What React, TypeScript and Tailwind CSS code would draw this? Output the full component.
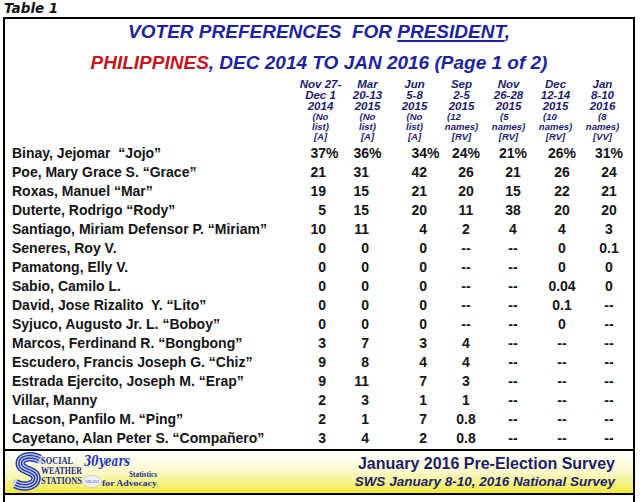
const SANS = "font-['Liberation_Sans',Arial,sans-serif]";

// header text per survey column
const HEADERS = [
  ['Nov 27-', 'Dec 1', '2014', '(No', 'list)', '[A]'],
  ['Mar', '20-13', '2015', '(No', 'list)', '[A]'],
  ['Jun', '5-8', '2015', '(No', 'list)', '[A]'],
  ['Sep', '2-5', '2015', '(12', 'names)', '[RV]'],
  ['Nov', '26-28', '2015', '(5', 'names)', '[RV]'],
  ['Dec', '12-14', '2015', '(10', 'names)', '[RV]'],
  ['Jan', '8-10', '2016', '(8', 'names)', '[VV]'],
];

// where the "(12" style line sits inside its column
const SMALL_FIRST = ['text-center', 'text-center', 'text-center', 'text-left pl-[9px]', 'text-left pl-[15px]', 'text-left pl-[11px]', 'text-left pl-[19px]'];

const DATA_CELL = [
  'text-right pr-[18px]',
  'text-right pr-[22px]',
  'text-right pr-[11px]',
  'text-center pl-[9px]',
  'text-center pl-[9px]',
  'text-center pl-[13px]',
  'text-center pl-[13px]',
];

const ROWS: [string, string[]][] = [
  ['Binay, Jejomar  \u201cJojo\u201d', ['37%', '36%', '34%', '24%', '21%', '26%', '31%']],
  ['Poe, Mary Grace S. \u201cGrace\u201d', ['21', '31', '42', '26', '21', '26', '24']],
  ['Roxas, Manuel \u201cMar\u201d', ['19', '15', '21', '20', '15', '22', '21']],
  ['Duterte, Rodrigo \u201cRody\u201d', ['5', '15', '20', '11', '38', '20', '20']],
  ['Santiago, Miriam Defensor P. \u201cMiriam\u201d', ['10', '11', '4', '2', '4', '4', '3']],
  ['Seneres, Roy V.', ['0', '0', '0', '--', '--', '0', '0.1']],
  ['Pamatong, Elly V.', ['0', '0', '0', '--', '--', '0', '0']],
  ['Sabio, Camilo L.', ['0', '0', '0', '--', '--', '0.04', '0']],
  ['David, Jose Rizalito  Y. \u201cLito\u201d', ['0', '0', '0', '--', '--', '0.1', '--']],
  ['Syjuco, Augusto Jr. L. \u201cBoboy\u201d', ['0', '0', '0', '--', '--', '0', '--']],
  ['Marcos, Ferdinand R. \u201cBongbong\u201d', ['3', '7', '3', '4', '--', '--', '--']],
  ['Escudero, Francis Joseph G. \u201cChiz\u201d', ['9', '8', '4', '4', '--', '--', '--']],
  ['Estrada Ejercito, Joseph M. \u201cErap\u201d', ['9', '11', '7', '3', '--', '--', '--']],
  ['Villar, Manny', ['2', '3', '1', '1', '--', '--', '--']],
  ['Lacson, Panfilo M. \u201cPing\u201d', ['2', '1', '7', '0.8', '--', '--', '--']],
  ['Cayetano, Alan Peter S. \u201cCompa\u00f1ero\u201d', ['3', '4', '2', '0.8', '--', '--', '--']],
];

function Cell({ value, col }: { value: string; col: number }) {
  // first three columns hang the % sign past the right edge
  if (col < 3 && value.endsWith('%')) {
    return (
      <div className={DATA_CELL[col]}>
        {value.slice(0, -1)}
        <span className="inline-block w-0">%</span>
      </div>
    );
  }
  return <div className={DATA_CELL[col]}>{value}</div>;
}

type P = [number, number];
// centre line of the striped "S" mark
const S_SEGS: [P, P, P, P][] = [
  [[25, 4], [15, -1], [3, 3], [7, 11]],
  [[7, 11], [10, 16], [22, 16], [22, 23]],
  [[22, 23], [22, 31], [10, 33], [2, 29]],
];

function ribbon(offset: number) {
  const pts: string[] = [];
  S_SEGS.forEach(([a, b, c, d], si) => {
    for (let k = si === 0 ? 0 : 1; k <= 14; k++) {
      const t = k / 14;
      const u = 1 - t;
      const x = u * u * u * a[0] + 3 * u * u * t * b[0] + 3 * u * t * t * c[0] + t * t * t * d[0];
      const y = u * u * u * a[1] + 3 * u * u * t * b[1] + 3 * u * t * t * c[1] + t * t * t * d[1];
      const dx = 3 * u * u * (b[0] - a[0]) + 6 * u * t * (c[0] - b[0]) + 3 * t * t * (d[0] - c[0]);
      const dy = 3 * u * u * (b[1] - a[1]) + 6 * u * t * (c[1] - b[1]) + 3 * t * t * (d[1] - c[1]);
      const len = Math.hypot(dx, dy) || 1;
      pts.push(`${(x - (dy / len) * offset).toFixed(2)} ${(y + (dx / len) * offset).toFixed(2)}`);
    }
  });
  return 'M' + pts.join(' L');
}

function SwsLogo() {
  return (
    <svg width="160" height="40" viewBox="0 0 160 40">
      <g transform="translate(1 3)" fill="none" strokeLinecap="round">
        <path d={ribbon(0)} stroke="#c4cff2" strokeWidth="9.5" />
        {[-4, -1.35, 1.35, 4].map((o) => (
          <path key={o} d={ribbon(o)} stroke="#2a3a9c" strokeWidth="1.4" />
        ))}
      </g>
      <g fill="#1f2c86" fontFamily="'Liberation Serif', serif" fontWeight="700" fontSize="11">
        <text x="28" y="12" textLength="32" lengthAdjust="spacingAndGlyphs">SOCIAL</text>
        <text x="28" y="22" textLength="41" lengthAdjust="spacingAndGlyphs">WEATHER</text>
        <text x="28" y="32" textLength="41" lengthAdjust="spacingAndGlyphs">STATIONS</text>
      </g>
      <text x="71" y="14" fill="#2a36b8" fontFamily="'DejaVu Serif', serif" fontStyle="italic" fontWeight="700" fontSize="14" textLength="46" lengthAdjust="spacingAndGlyphs">30years</text>
      <g fill="#1f2c86" fontFamily="'Liberation Serif', serif" fontWeight="700" fontSize="8.5">
        <text x="116" y="25" textLength="28" lengthAdjust="spacingAndGlyphs">Statistics</text>
        <text x="89" y="34" textLength="55" lengthAdjust="spacingAndGlyphs">for Advocacy</text>
      </g>
      <ellipse cx="79" cy="29.5" rx="9.5" ry="6" fill="#eef0f8" stroke="#b8bcd8" strokeWidth="0.6" />
      <text x="72" y="31" fill="#5060b8" fontFamily="'Liberation Sans', sans-serif" fontStyle="italic" fontSize="4" textLength="14" lengthAdjust="spacingAndGlyphs">1985-2015</text>
    </svg>
  );
}

export default function App() {
  return (
    <div className={`w-[640px] h-[502px] overflow-hidden bg-white ${SANS}`}>
      <div className="h-[17px] pl-[4px] pt-[1px] text-[13.5px] leading-[15px] font-bold italic text-[#111] font-['DejaVu_Sans',sans-serif]">
        Table 1
      </div>
      <div className="ml-[3px] w-[632px] h-[485px] border-2 border-b-0 border-black">
        {/* title */}
        <div className="text-center text-[19px] font-bold italic whitespace-pre text-[#1d23a0]">
          <div className="h-[26px] leading-[26px]">
            {'VOTER PREFERENCES  FOR '}
            <span className="underline decoration-2 underline-offset-2">PRESIDENT</span>,
          </div>
          <div className="h-[26px] mt-[5px] leading-[26px]">
            <span className="text-[#c4161c]">PHILIPPINES</span>, DEC 2014 TO JAN 2016 (Page 1 of 2)
          </div>
        </div>

        {/* column headers */}
        <div className="mt-[3px] pl-[7px] grid grid-cols-[285px_repeat(7,47px)] font-bold italic text-[#1b1c6e]">
          <div />
          {HEADERS.map((h, i) => (
            <div key={i} className="flex flex-col whitespace-nowrap">
              <div className="h-[11px] leading-[11px] text-[11.5px] text-center">{h[0]}</div>
              <div className="h-[11px] leading-[11px] text-[11.5px] text-center">{h[1]}</div>
              <div className="h-[11px] leading-[11px] text-[11.5px] text-center">{h[2]}</div>
              <div className={`h-[10px] leading-[10px] text-[9.5px] ${SMALL_FIRST[i]}`}>{h[3]}</div>
              <div className="h-[10px] leading-[10px] text-[9.5px] text-center">{h[4]}</div>
              <div className="h-[10px] leading-[10px] text-[9.5px] text-center">{h[5]}</div>
            </div>
          ))}
        </div>

        {/* data rows */}
        <div className="mt-[2px] pl-[7px] text-[14px] font-bold text-[#141414]">
          {ROWS.map(([name, vals]) => (
            <div key={name} className="grid grid-cols-[285px_repeat(7,47px)] h-[19px] leading-[19px] whitespace-pre">
              <div>{name}</div>
              {vals.map((v, i) => (
                <Cell key={i} value={v} col={i} />
              ))}
            </div>
          ))}
        </div>

        {/* footer */}
        <div className="mt-[1px] h-[46px] border-y-2 border-black bg-linear-to-b from-white via-[#fbf9c8] to-[#f2ea22] flex items-center justify-between pl-[8px] pr-[18px]">
          <SwsLogo />
          <div className="flex flex-col items-end text-[#1c1d6c] font-bold">
            <div className="text-[16px] leading-[19px]">January 2016 Pre-Election Survey</div>
            <div className="text-[13.5px] leading-[18px] italic">SWS January 8-10, 2016 National Survey</div>
          </div>
        </div>
      </div>
    </div>
  );
}
